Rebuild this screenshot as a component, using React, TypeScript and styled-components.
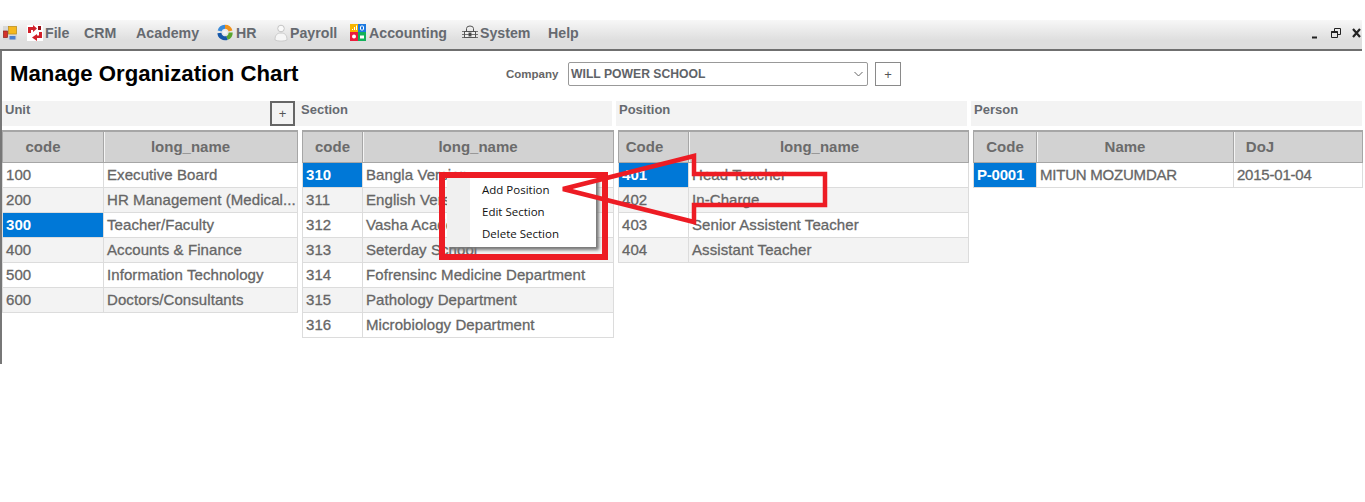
import React from "react";
import styled, { createGlobalStyle } from "styled-components";

const Global = createGlobalStyle`
  html, body { margin: 0; padding: 0; background: #fff; height: 502px; overflow: hidden; }
  * { box-sizing: border-box; }
`;

const Page = styled.div`
  position: relative;
  width: 1365px;
  height: 502px;
  padding-top: 20px;
  font-family: "Liberation Sans", Arial, sans-serif;
`;

const MenuBar = styled.div`
  width: 1362px;
  height: 31px;
  display: flex;
  align-items: center;
  padding: 0 0 4px 2px;
  background: linear-gradient(#f7f7f7, #dedede 70%);
  border-bottom: 2px solid #6f6f6f;
`;

const MenuItem = styled.div<{ $w: number; $gap?: number }>`
  width: ${(p) => p.$w}px;
  flex: none;
  display: flex;
  align-items: center;
  gap: ${(p) => p.$gap ?? 2}px;
  font-weight: 700;
  font-size: 14.2px;
  color: #666a70;
  white-space: nowrap;
`;

const AppIconSlot = styled.div`
  width: 25px;
  flex: none;
  display: flex;
  padding-left: 1px;
`;

const WindowControls = styled.div`
  margin-left: auto;
  display: flex;
  align-items: center;
  padding-right: 1px;
`;

const Body = styled.div`
  width: 1362px;
  height: 313px;
  border-left: 2px solid #777;
`;

const TitleRow = styled.div`
  height: 50px;
  display: flex;
  align-items: center;
  padding: 0 0 4px 8px;
`;

const Title = styled.h1`
  margin: 0;
  width: 496px;
  font-size: 22.2px;
  font-weight: 700;
  color: #000;
  white-space: nowrap;
`;

const CompanyLabel = styled.label`
  width: 62px;
  font-size: 11.5px;
  font-weight: 700;
  color: #666;
`;

const Select = styled.div`
  width: 300px;
  height: 24px;
  display: flex;
  align-items: center;
  justify-content: space-between;
  padding: 0 4px 0 2px;
  border: 1px solid #999;
  border-radius: 2px;
  background: #fff;
  font-size: 12.2px;
  font-weight: 700;
  color: #5f6368;
`;

const PlusBox = styled.div`
  width: 26px;
  height: 24px;
  margin-left: 7px;
  display: flex;
  align-items: center;
  justify-content: center;
  border: 1px solid #8a8a8a;
  font-size: 13px;
  color: #555;
`;

const Columns = styled.div`
  display: grid;
  grid-template-columns: 296px 318px 355px 391px;
`;

const Column = styled.section`
  display: flex;
  flex-direction: column;
`;

const PanelHead = styled.div<{ $gap: number }>`
  position: relative;
  height: 25px;
  margin-right: ${(p) => p.$gap}px;
  padding: 1px 0 0 3px;
  background: #f3f3f3;
  font-size: 13px;
  font-weight: 700;
  color: #666a70;
`;

const HeadPlus = styled.div`
  position: absolute;
  right: 3px;
  top: 0;
  width: 25px;
  height: 25px;
  display: flex;
  align-items: center;
  justify-content: center;
  border: 2px solid #666;
  background: #f3f3f3;
  font-weight: 400;
  font-size: 13px;
  color: #555;
`;

const Table = styled.table<{ $w: number; $ml: number; $track: number }>`
  width: ${(p) => p.$w}px;
  margin-top: 4px;
  margin-left: ${(p) => p.$ml}px;
  border-collapse: collapse;
  table-layout: fixed;
  font-size: 15px;
  letter-spacing: ${(p) => p.$track}px;
  color: #666;
`;

const Th = styled.th<{ $w: number; $offset: number }>`
  width: ${(p) => p.$w}px;
  height: 31px;
  padding: 0 ${(p) => p.$offset}px 0 0;
  background: #d2d2d2;
  border: 1px solid #a6a6a6;
  border-top-width: 2px;
  box-shadow: inset 1px 0 0 #f4f4f4;
  color: #6b6b6b;
  font-size: 15px;
  font-weight: 700;
  text-align: center;
  letter-spacing: 0;
  &:first-child { box-shadow: none; }
`;

const Tr = styled.tr<{ $alt: boolean }>`
  background: ${(p) => (p.$alt ? "#f3f3f3" : "#fff")};
`;

const Td = styled.td<{ $sel?: boolean }>`
  height: 25px;
  padding: 0 0 0 3px;
  border: 1px solid #dcdcdc;
  border-top: 0;
  white-space: nowrap;
  overflow: hidden;
  font-weight: ${(p) => (p.$sel ? 700 : 400)};
  -webkit-text-stroke: ${(p) => (p.$sel ? "0" : "0.3px")};
  color: ${(p) => (p.$sel ? "#fff" : "#666")};
  background: ${(p) => (p.$sel ? "#0078d7" : "transparent")};
`;

const ContextMenu = styled.div`
  position: absolute;
  left: 447px;
  top: 177px;
  width: 149px;
  height: 70px;
  padding: 2px 0 0 35px;
  background: linear-gradient(90deg, #f0f0f0 23px, #fff 23px);
  box-shadow: 3px 3px 3px #777;
  font-family: "Open Sans", "Noto Sans", sans-serif;
  font-size: 11.5px;
  color: #111;
`;

const ContextItem = styled.div`
  height: 22px;
  line-height: 22px;
  white-space: nowrap;
`;

const Annotation = styled.svg`
  position: absolute;
  left: 0;
  top: 0;
  pointer-events: none;
`;

const FileIcon = () => (
  <svg width="16" height="16" viewBox="0 0 16 16">
    <rect width="16" height="16" fill="#fff" />
    <path d="M1 2h5V0l4 3.500L6 7V5H4v3H1z" fill="#d2202a" />
    <path d="M15 13h-5v3L5 12.500 10 9v1.500h2V7h3z" fill="#d2202a" />
    <path d="M11 1h3v4h-3z" fill="#9c1219" />
  </svg>
);
const AppIcon = () => (
  <svg width="14" height="14" viewBox="0 0 14 14">
    <rect x="0" y="0" width="14" height="14" fill="#d8d8d8" />
    <rect x="5.500" y="0.500" width="8" height="7.500" fill="#f5b81f" stroke="#b98a18" strokeWidth=".7" />
    <rect x="0.500" y="5" width="4" height="6.500" fill="#d4322a" stroke="#8d1f18" strokeWidth=".7" />
    <rect x="6.500" y="10" width="6" height="3.500" fill="#4a7fd0" />
  </svg>
);
const HrIcon = () => (
  <svg width="16" height="17" viewBox="0 0 16 17" fill="none" strokeWidth="4">
    <path d="M2.600 7A5.700 5.700 0 0 1 8 2.800" stroke="#3a8ad8" />
    <path d="M8 2.800A5.700 5.700 0 0 1 13.500 7" stroke="#f0921c" />
    <path d="M13.700 8.500A5.700 5.700 0 0 1 10 14" stroke="#5aa62e" />
    <path d="M10 14A5.700 5.700 0 0 1 2.400 9" stroke="#1557a8" />
    <circle cx="8" cy="8.500" r="2" fill="#f2f5f6" />
  </svg>
);
const PayrollIcon = () => (
  <svg width="16" height="18" viewBox="0 0 16 18">
    <circle cx="8" cy="4.500" r="3.300" fill="#fafafa" stroke="#c4c4c4" />
    <path d="M2 16c0-5 2-7 6-7s6 2 6 7c-3 1.500-9 1.500-12 0z" fill="#f6f6f6" stroke="#cbcbcb" />
  </svg>
);
const AccountingIcon = () => (
  <svg width="16" height="17" viewBox="0 0 16 17">
    <rect width="8" height="8" fill="#f7b500" />
    <rect x="8" width="8" height="8" fill="#1b78e0" />
    <rect y="8" width="8" height="9" fill="#ec1c3c" />
    <rect x="8" y="8" width="8" height="9" fill="#12b05a" />
    <path d="M2 6h1V5H2zM4 6h1V3H4zM6 6h1V1.500H6z" fill="#fff" />
    <rect x="10.500" y="2" width="3" height="4" rx="1" fill="none" stroke="#fff" />
    <circle cx="4" cy="12.500" r="2" fill="#fff" />
    <rect x="10" y="11.500" width="4" height="3" fill="#fff" />
  </svg>
);
const SystemIcon = () => (
  <svg width="16" height="16" viewBox="0 0 16 16" fill="none" stroke="#555">
    <path d="M4.500 6V3.500a3.500 2.500 0 0 1 7 0V6" />
    <rect x="2.500" y="6.500" width="11" height="6" fill="#eee" />
    <path d="M0 6.500h16M0 9.500h16M0 12.500h16" strokeWidth=".8" />
    <rect x="7" y="8" width="2" height="3" fill="#333" />
  </svg>
);

type Row = string[];
const units: Row[] = [
  ["100", "Executive Board"],
  ["200", "HR Management (Medical..."],
  ["300", "Teacher/Faculty"],
  ["400", "Accounts & Finance"],
  ["500", "Information Technology"],
  ["600", "Doctors/Consultants"],
];
const sections: Row[] = [
  ["310", "Bangla Version"],
  ["311", "English Version"],
  ["312", "Vasha Academy"],
  ["313", "Seterday School"],
  ["314", "Fofrensinc Medicine Department"],
  ["315", "Pathology Department"],
  ["316", "Microbiology Department"],
];
const positions: Row[] = [
  ["401", "Head Teacher"],
  ["402", "In-Charge"],
  ["403", "Senior Assistent Teacher"],
  ["404", "Assistant Teacher"],
];
const persons: Row[] = [["P-0001", "MITUN MOZUMDAR", "2015-01-04"]];

const DataTable = ({
  cols,
  widths,
  offsets,
  rows,
  selected,
  ml,
  track = 0.08,
}: {
  cols: string[];
  widths: number[];
  offsets: number[];
  rows: Row[];
  selected: number;
  ml: number;
  track?: number;
}) => (
  <Table $w={widths.reduce((a, b) => a + b, 0)} $ml={ml} $track={track}>
    <thead>
      <tr>
        {cols.map((c, i) => (
          <Th key={c} $w={widths[i]} $offset={offsets[i]}>
            {c}
          </Th>
        ))}
      </tr>
    </thead>
    <tbody>
      {rows.map((r, i) => (
        <Tr key={r[0]} $alt={i % 2 === 1}>
          {r.map((cell, j) => (
            <Td key={j} $sel={i === selected && j === 0}>
              {cell}
            </Td>
          ))}
        </Tr>
      ))}
    </tbody>
  </Table>
);

export default function App() {
  return (
    <Page>
      <Global />
      <MenuBar>
        <AppIconSlot><AppIcon /></AppIconSlot>
        <MenuItem $w={57}><FileIcon />File</MenuItem>
        <MenuItem $w={52}>CRM</MenuItem>
        <MenuItem $w={81}>Academy</MenuItem>
        <MenuItem $w={56} $gap={3}><HrIcon />HR</MenuItem>
        <MenuItem $w={77} $gap={1}><PayrollIcon />Payroll</MenuItem>
        <MenuItem $w={112} $gap={3}><AccountingIcon />Accounting</MenuItem>
        <MenuItem $w={86}><SystemIcon />System</MenuItem>
        <MenuItem $w={40}>Help</MenuItem>
        <WindowControls>
          <svg width="52" height="12" viewBox="0 0 52 12" fill="none" stroke="#222">
            <path d="M3 10.500h5" strokeWidth="2" />
            <path d="M22.500 4.500h6v6h-6zM25.500 4V1.500h6v6H29" />
            <path d="M22.500 5h6" strokeWidth="2" />
            <path d="M44 2l7 8M51 2l-7 8" strokeWidth="2.200" />
          </svg>
        </WindowControls>
      </MenuBar>
      <Body>
        <TitleRow>
          <Title>Manage Organization Chart</Title>
          <CompanyLabel>Company</CompanyLabel>
          <Select>
            WILL POWER SCHOOL
            <svg width="9" height="6" viewBox="0 0 9 6" fill="none" stroke="#666">
              <path d="M.5 1l4 4 4-4" />
            </svg>
          </Select>
          <PlusBox>+</PlusBox>
        </TitleRow>
        <Columns>
          <Column>
            <PanelHead $gap={0}>Unit<HeadPlus>+</HeadPlus></PanelHead>
            <DataTable cols={["code", "long_name"]} widths={[101, 194]} offsets={[20, 20]} rows={units} selected={2} ml={0} />
          </Column>
          <Column>
            <PanelHead $gap={4}>Section</PanelHead>
            <DataTable cols={["code", "long_name"]} widths={[60, 251]} offsets={[0, 20]} rows={sections} selected={0} ml={4} />
          </Column>
          <Column>
            <PanelHead $gap={4}>Position</PanelHead>
            <DataTable cols={["Code", "long_name"]} widths={[70, 280]} offsets={[18, 18]} rows={positions} selected={0} ml={2} />
          </Column>
          <Column>
            <PanelHead $gap={0}>Person</PanelHead>
            <DataTable cols={["Code", "Name", "DoJ"]} widths={[63, 197, 129]} offsets={[0, 20, 76]} rows={persons} selected={0} ml={2} track={-0.22} />
          </Column>
        </Columns>
      </Body>
      <ContextMenu>
        <ContextItem>Add Position</ContextItem>
        <ContextItem>Edit Section</ContextItem>
        <ContextItem>Delete Section</ContextItem>
      </ContextMenu>
      <Annotation width="1365" height="502" viewBox="0 0 1365 502" fill="none" stroke="#ed1c24" strokeWidth="6">
        <rect x="442" y="175" width="163" height="82" />
        <path d="M563 189L694 156V174H825V205H694V222Z" strokeWidth="4.500" />
      </Annotation>
    </Page>
  );
}
